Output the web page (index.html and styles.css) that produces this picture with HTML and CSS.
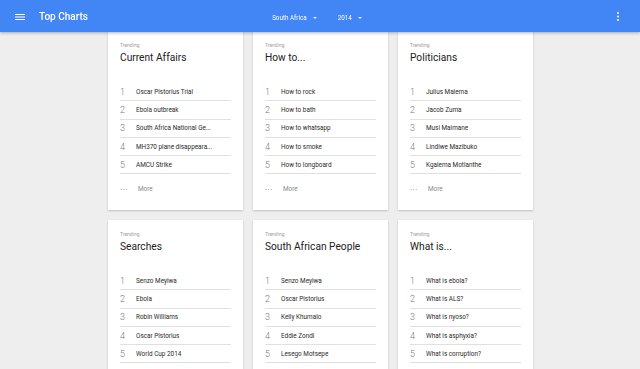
FILE: index.html
```html
<!DOCTYPE html>
<html lang="en">
<head>
  <meta charset="UTF-8" />
  <title>Top Charts</title>
  <link rel="stylesheet" href="styles.css">
</head>
<body>

  <div class="topbar">
    <div class="brand">
      <svg class="menu" viewBox="0 0 10 6" width="10" height="6">
        <rect x="0" y="0" width="10" height="1" fill="#fff"/>
        <rect x="0" y="2.5" width="10" height="1" fill="#fff"/>
        <rect x="0" y="5" width="10" height="1" fill="#fff"/>
      </svg>
      <span class="app-title">Top Charts</span>
    </div>
    <div class="filters">
      <span class="select">South Africa <i class="caret"></i></span>
      <span class="select">2014 <i class="caret"></i></span>
    </div>
    <div class="actions">
      <svg class="more-icon" viewBox="0 0 2 9" width="2" height="9">
        <circle cx="1" cy="1" r="1" fill="#fff"/>
        <circle cx="1" cy="4.5" r="1" fill="#fff"/>
        <circle cx="1" cy="8" r="1" fill="#fff"/>
      </svg>
    </div>
  </div>

  <div class="charts">

    <div class="card">
      <div class="label">Trending</div>
      <div class="title">Current Affairs</div>
      <ol class="list">
        <li><span class="num">1</span><span class="item">Oscar Pistorius Trial</span></li>
        <li><span class="num">2</span><span class="item">Ebola outbreak</span></li>
        <li><span class="num">3</span><span class="item">South Africa National Ge...</span></li>
        <li><span class="num">4</span><span class="item">MH370 plane disappeara...</span></li>
        <li><span class="num">5</span><span class="item">AMCU Strike</span></li>
      </ol>
      <div class="more"><span class="dots">&middot;&middot;&middot;</span>More</div>
    </div>

    <div class="card">
      <div class="label">Trending</div>
      <div class="title">How to...</div>
      <ol class="list">
        <li><span class="num">1</span><span class="item">How to rock</span></li>
        <li><span class="num">2</span><span class="item">How to bath</span></li>
        <li><span class="num">3</span><span class="item">How to whatsapp</span></li>
        <li><span class="num">4</span><span class="item">How to smoke</span></li>
        <li><span class="num">5</span><span class="item">How to longboard</span></li>
      </ol>
      <div class="more"><span class="dots">&middot;&middot;&middot;</span>More</div>
    </div>

    <div class="card">
      <div class="label">Trending</div>
      <div class="title">Politicians</div>
      <ol class="list">
        <li><span class="num">1</span><span class="item">Julius Malema</span></li>
        <li><span class="num">2</span><span class="item">Jacob Zuma</span></li>
        <li><span class="num">3</span><span class="item">Musi Maimane</span></li>
        <li><span class="num">4</span><span class="item">Lindiwe Mazibuko</span></li>
        <li><span class="num">5</span><span class="item">Kgalema Motlanthe</span></li>
      </ol>
      <div class="more"><span class="dots">&middot;&middot;&middot;</span>More</div>
    </div>

    <div class="card">
      <div class="label">Trending</div>
      <div class="title">Searches</div>
      <ol class="list">
        <li><span class="num">1</span><span class="item">Senzo Meyiwa</span></li>
        <li><span class="num">2</span><span class="item">Ebola</span></li>
        <li><span class="num">3</span><span class="item">Robin Williams</span></li>
        <li><span class="num">4</span><span class="item">Oscar Pistorius</span></li>
        <li><span class="num">5</span><span class="item">World Cup 2014</span></li>
      </ol>
      <div class="more"><span class="dots">&middot;&middot;&middot;</span>More</div>
    </div>

    <div class="card">
      <div class="label">Trending</div>
      <div class="title">South African People</div>
      <ol class="list">
        <li><span class="num">1</span><span class="item">Senzo Meyiwa</span></li>
        <li><span class="num">2</span><span class="item">Oscar Pistorius</span></li>
        <li><span class="num">3</span><span class="item">Kelly Khumalo</span></li>
        <li><span class="num">4</span><span class="item">Eddie Zondi</span></li>
        <li><span class="num">5</span><span class="item">Lesego Motsepe</span></li>
      </ol>
      <div class="more"><span class="dots">&middot;&middot;&middot;</span>More</div>
    </div>

    <div class="card">
      <div class="label">Trending</div>
      <div class="title">What is...</div>
      <ol class="list">
        <li><span class="num">1</span><span class="item">What is ebola?</span></li>
        <li><span class="num">2</span><span class="item">What is ALS?</span></li>
        <li><span class="num">3</span><span class="item">What is nyoso?</span></li>
        <li><span class="num">4</span><span class="item">What is asphyxia?</span></li>
        <li><span class="num">5</span><span class="item">What is corruption?</span></li>
      </ol>
      <div class="more"><span class="dots">&middot;&middot;&middot;</span>More</div>
    </div>

  </div>

</body>
</html>
```

FILE: styles.css
```css
html, body {
  overflow: hidden;
}
body {
  font-family: Roboto, "Liberation Sans", Arial, sans-serif;
  background: #eeeeee;
  margin: 0;
  color: #212121;
}
.topbar {
  position: fixed;
  top: 0;
  left: 0;
  right: 0;
  z-index: 2;
  height: 32px;
  background: #4285f4;
  box-shadow: 0 1px 3px rgba(0, 0, 0, 0.3);
  display: grid;
  grid-template-columns: 1fr auto 1fr;
  align-items: center;
  color: #fff;
}
.brand {
  display: flex;
  align-items: center;
  padding-left: 15px;
}
.menu {
  display: block;
  margin-top: 1px;
}
.app-title {
  margin-left: 14px;
  font-size: 10px;
  font-weight: 500;
}
.filters {
  display: flex;
  align-items: center;
  gap: 21px;
  font-size: 6.3px;
  padding-top: 3px;
  padding-right: 6px;
}
.select {
  display: flex;
  align-items: center;
}
.caret {
  display: inline-block;
  margin-left: 6px;
  width: 0;
  height: 0;
  border-left: 2px solid transparent;
  border-right: 2px solid transparent;
  border-top: 2px solid rgba(255, 255, 255, 0.85);
}
.actions {
  display: flex;
  justify-content: flex-end;
  padding-right: 21px;
}
.more-icon {
  display: block;
}
.charts {
  display: grid;
  grid-template-columns: repeat(3, 135px);
  gap: 10px;
  justify-content: center;
  padding-top: 31px;
  margin-left: 1px;
}
.card {
  background: #fff;
  box-shadow: 0 1px 2px rgba(0, 0, 0, 0.2);
  padding: 10px 12px 5px;
  height: 164px;
}
.label {
  font-size: 5px;
  line-height: 8px;
  color: #9e9e9e;
}
.title {
  margin-top: 2px;
  font-size: 10.2px;
  line-height: 14px;
  color: #212121;
}
.list {
  list-style: none;
  margin: 18px 0 0;
  padding: 0;
}
.list li {
  height: 18.3px;
  border-bottom: 1px solid #e0e0e0;
  box-sizing: border-box;
  display: flex;
  align-items: center;
}
.num {
  width: 16px;
  font-size: 9px;
  font-weight: 300;
  color: #7a7a7a;
}
.item {
  font-size: 6.4px;
  color: #2a2a2a;
  white-space: nowrap;
}
.more {
  height: 30px;
  display: flex;
  align-items: center;
  font-size: 6.4px;
  color: #8a8a8a;
}
.dots {
  width: 18px;
  font-size: 8px;
  letter-spacing: 0.5px;
  color: #757575;
}
```
